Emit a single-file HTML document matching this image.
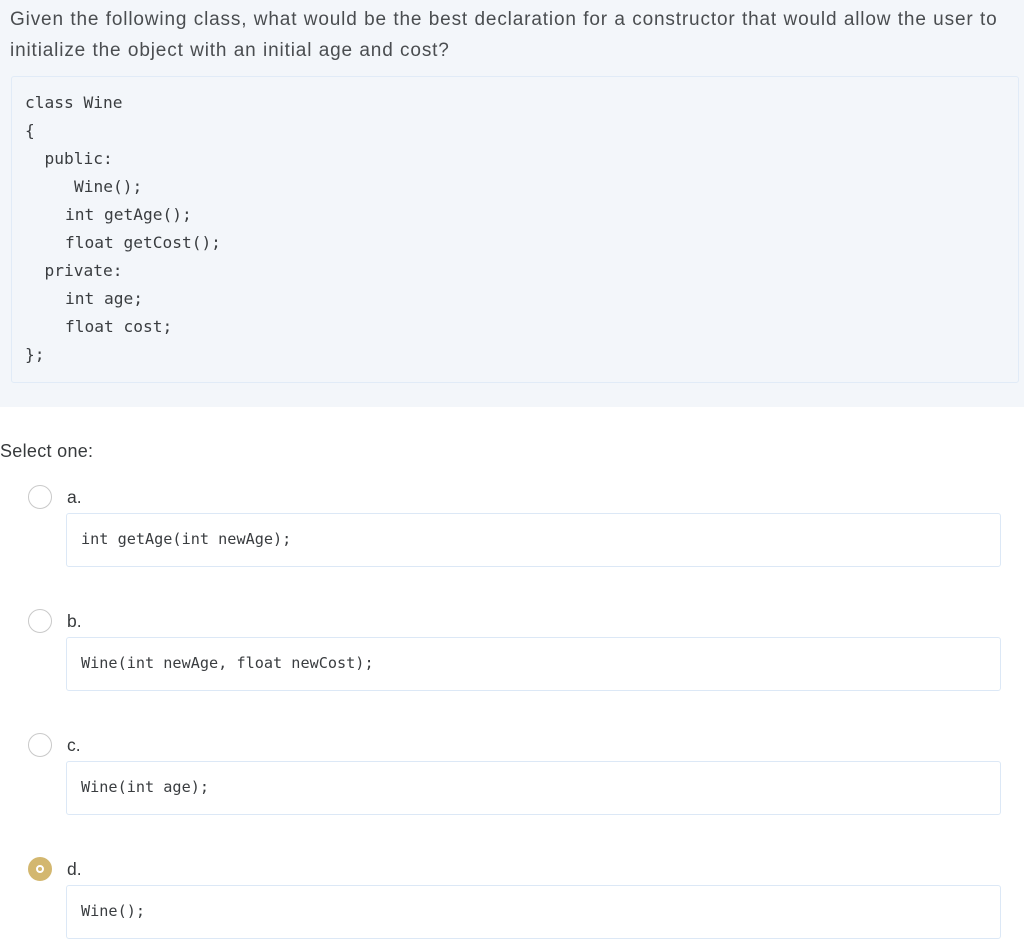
<!DOCTYPE html>
<html><head><meta charset="utf-8"><style>
body{margin:0;width:1024px;height:950px;background:#fff;position:relative;font-family:"Liberation Sans",sans-serif;color:#373a3c;overflow:hidden}
.top{position:absolute;left:0;top:0;width:1024px;height:407px;background:#f3f6fa}
.q{position:absolute;left:10px;top:4px;font-size:19px;line-height:31px;color:#4a4d50;width:1010px;letter-spacing:0.85px;word-spacing:0.3px}
.code{position:absolute;left:11px;top:76px;width:1006px;height:305px;border:1px solid #e1ebf7;border-radius:3px;background:#f3f6fa}
.m{font-family:"DejaVu Sans Mono","Liberation Mono",monospace;color:#3a3d40;position:absolute;white-space:pre}
.cl{font-size:16.2px;left:25px}
.sel{position:absolute;left:0;top:441px;font-size:18px;color:#373a3c;letter-spacing:0.3px}
.radio{position:absolute;left:28px;width:22px;height:22px;border:1px solid #c9c9c9;border-radius:50%;background:#fff}
.radio.on{background:#d3b76f;border-color:#d3b76f}
.radio.on::after{content:"";position:absolute;border:2px solid #fff;border-radius:50%;box-sizing:border-box;width:8px;height:8px;left:7px;top:7px}
.lab{position:absolute;left:67px;font-size:17.5px;color:#373a3c}
.box{position:absolute;left:66px;width:933px;height:52px;border:1px solid #dce8f6;border-radius:3px;background:#fff}
.oc{font-size:15.2px;left:81px}
</style></head><body>
<div class="top"></div>
<div class="q">Given the following class, what would be the best declaration for a constructor that would allow the user to initialize the object with an initial age and cost?</div>
<div class="code"></div>
<div class="m cl" style="top:93px">class Wine</div>
<div class="m cl" style="top:121px">{</div>
<div class="m cl" style="top:149px">  public:</div>
<div class="m cl" style="top:177px;left:74px">Wine();</div>
<div class="m cl" style="top:205px;left:65px">int getAge();</div>
<div class="m cl" style="top:233px;left:65px">float getCost();</div>
<div class="m cl" style="top:261px">  private:</div>
<div class="m cl" style="top:289px;left:65px">int age;</div>
<div class="m cl" style="top:317px;left:65px">float cost;</div>
<div class="m cl" style="top:345px">};</div>
<div class="sel">Select one:</div>

<div class="radio" style="top:485px"></div><div class="lab" style="top:487px">a.</div>
<div class="box" style="top:513px"></div><div class="m oc" style="top:530px">int getAge(int newAge);</div>

<div class="radio" style="top:609px"></div><div class="lab" style="top:611px">b.</div>
<div class="box" style="top:637px"></div><div class="m oc" style="top:654px">Wine(int newAge, float newCost);</div>

<div class="radio" style="top:733px"></div><div class="lab" style="top:735px">c.</div>
<div class="box" style="top:761px"></div><div class="m oc" style="top:778px">Wine(int age);</div>

<div class="radio on" style="top:857px"></div><div class="lab" style="top:859px">d.</div>
<div class="box" style="top:885px"></div><div class="m oc" style="top:902px">Wine();</div>
</body></html>
